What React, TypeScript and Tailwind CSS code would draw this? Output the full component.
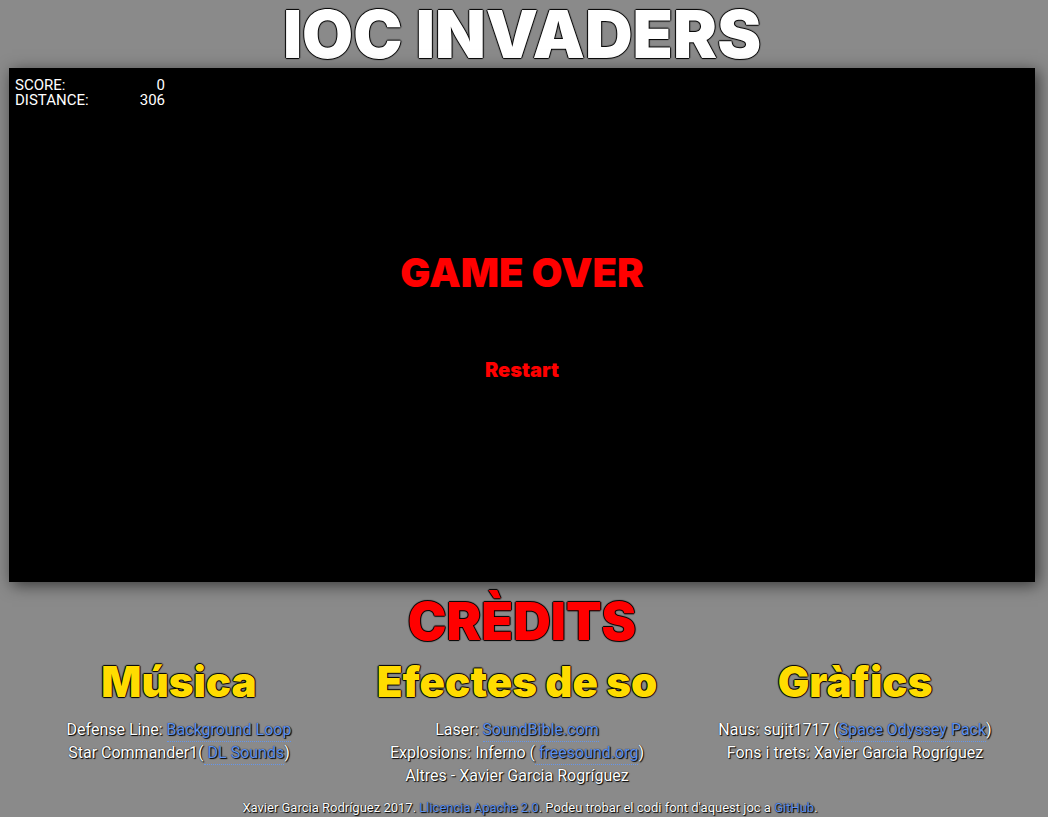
import type { ReactNode } from "react";

const outline = "[text-shadow:-1px_0_1px_#000,0_1px_1px_#000,1px_0_1px_#000,0_-1px_1px_#000]";
const thinOutline = "[text-shadow:0_0_1px_#000,1px_1px_1px_#000]";

function CreditLink({ href, children }: { href: string; children: ReactNode }) {
  return (
    <a href={href} className="border-b border-dotted border-[#6495ed] pb-[2px] text-[#5e92f0]">
      {children}
    </a>
  );
}

function Column({ title, children }: { title: string; children: ReactNode }) {
  return (
    <section>
      <h3 className={`font-['Inter',sans-serif] text-[42px] leading-[48px] font-black whitespace-nowrap text-[#ffdc00] ${outline}`}>
        {title}
      </h3>
      <ul className={`mt-3 text-base leading-[23px] ${thinOutline}`}>{children}</ul>
    </section>
  );
}

export default function App() {
  return (
    <div className="flex min-h-screen flex-col bg-[#8a8a8a] pr-[13px] pl-[9px] text-center font-['Roboto',sans-serif] text-white">
      <h1 className={`font-['Inter',sans-serif] text-[66px] leading-[68px] font-black whitespace-nowrap ${outline}`}>
        IOC INVADERS
      </h1>

      <main className="flex h-[514px] flex-col bg-black shadow-[3px_3px_15px_rgba(0,0,0,0.6)]">
        <dl className="grid w-[156px] grid-cols-2 pt-[10px] pl-[6px] text-left text-[15px] leading-[15px]">
          <dt>SCORE:</dt>
          <dd className="text-right">0</dd>
          <dt>DISTANCE:</dt>
          <dd className="text-right">306</dd>
        </dl>
        <div className="mt-[141px] flex flex-col items-center font-['Inter',sans-serif] text-[#ff0000]">
          <p className="text-[40px] leading-[48px] font-black">GAME OVER</p>
          <button type="button" className="mt-[61px] cursor-pointer text-xl leading-6 font-black">
            Restart
          </button>
        </div>
      </main>

      <h2 className={`mt-[10px] font-['Inter',sans-serif] text-[52px] leading-[60px] font-black text-[#ff0000] ${outline}`}>
        CRÈDITS
      </h2>

      <div className="mt-[6px] mr-[11px] ml-px grid grid-cols-3">
        <Column title="Música">
          <li>
            Defense Line: <CreditLink href="#background-loop">Background Loop</CreditLink>
          </li>
          <li>
            Star Commander1(<CreditLink href="#dl-sounds"> DL Sounds</CreditLink>)
          </li>
        </Column>
        <Column title="Efectes de so">
          <li>
            Laser: <CreditLink href="#soundbible">SoundBible.com</CreditLink>
          </li>
          <li>
            Explosions: Inferno (<CreditLink href="#freesound"> freesound.org</CreditLink>)
          </li>
          <li>Altres - Xavier Garcia Rogríguez</li>
        </Column>
        <Column title="Gràfics">
          <li>
            Naus: sujit1717 (<CreditLink href="#space-odyssey">Space Odyssey Pack</CreditLink>)
          </li>
          <li>Fons i trets: Xavier Garcia Rogríguez</li>
        </Column>
      </div>

      <footer className={`mt-3 pl-4 text-[13px] leading-[18px] ${thinOutline}`}>
        Xavier Garcia Rodríguez 2017. <a href="#license" className="text-[#5e92f0]">Llicencia Apache 2.0</a>. Podeu trobar el codi font d'aquest joc a{" "}
        <a href="#github" className="text-[#5e92f0]">GitHub</a>.
      </footer>
    </div>
  );
}
